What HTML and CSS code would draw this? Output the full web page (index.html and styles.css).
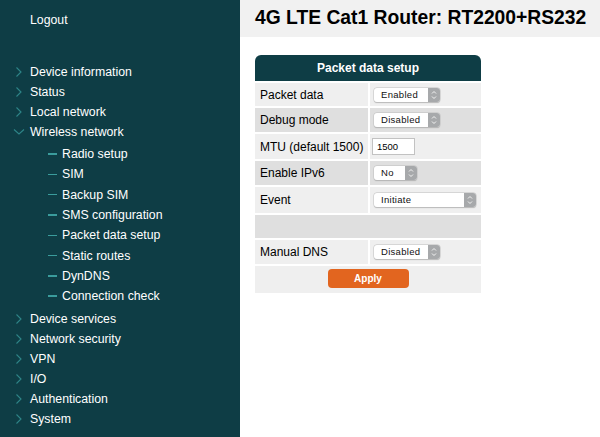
FILE: index.html
```html
<!DOCTYPE html>
<html>
<head>
<meta charset="utf-8">
<link rel="stylesheet" href="styles.css">
</head>
<body>
<nav class="sidebar">
  <div class="logout">Logout</div>
  <ul class="menu">
    <li class="item"><svg class="chev" viewBox="0 0 8 12"><path d="M1.5 1.5 L6 6 L1.5 10.5"/></svg><span>Device information</span></li>
    <li class="item"><svg class="chev" viewBox="0 0 8 12"><path d="M1.5 1.5 L6 6 L1.5 10.5"/></svg><span>Status</span></li>
    <li class="item"><svg class="chev" viewBox="0 0 8 12"><path d="M1.5 1.5 L6 6 L1.5 10.5"/></svg><span>Local network</span></li>
    <li class="item"><svg class="chev down" viewBox="0 0 12 8"><path d="M1 1.5 L6 6 L11 1.5"/></svg><span>Wireless network</span></li>
    <li class="sub">
      <ul class="submenu">
        <li><i class="dash"></i><span>Radio setup</span></li>
        <li><i class="dash"></i><span>SIM</span></li>
        <li><i class="dash"></i><span>Backup SIM</span></li>
        <li><i class="dash"></i><span>SMS configuration</span></li>
        <li><i class="dash"></i><span>Packet data setup</span></li>
        <li><i class="dash"></i><span>Static routes</span></li>
        <li><i class="dash"></i><span>DynDNS</span></li>
        <li><i class="dash"></i><span>Connection check</span></li>
      </ul>
    </li>
    <li class="item"><svg class="chev" viewBox="0 0 8 12"><path d="M1.5 1.5 L6 6 L1.5 10.5"/></svg><span>Device services</span></li>
    <li class="item"><svg class="chev" viewBox="0 0 8 12"><path d="M1.5 1.5 L6 6 L1.5 10.5"/></svg><span>Network security</span></li>
    <li class="item"><svg class="chev" viewBox="0 0 8 12"><path d="M1.5 1.5 L6 6 L1.5 10.5"/></svg><span>VPN</span></li>
    <li class="item"><svg class="chev" viewBox="0 0 8 12"><path d="M1.5 1.5 L6 6 L1.5 10.5"/></svg><span>I/O</span></li>
    <li class="item"><svg class="chev" viewBox="0 0 8 12"><path d="M1.5 1.5 L6 6 L1.5 10.5"/></svg><span>Authentication</span></li>
    <li class="item"><svg class="chev" viewBox="0 0 8 12"><path d="M1.5 1.5 L6 6 L1.5 10.5"/></svg><span>System</span></li>
  </ul>
</nav>
<main class="main">
  <header class="topbar"><h1>4G LTE Cat1 Router: RT2200+RS232</h1></header>
  <div class="form">
    <div class="form-head">Packet data setup</div>
    <div class="row r-light h23">
      <div class="label">Packet data</div>
      <div class="value"><span class="select w66"><span class="sel-text">Enabled</span><span class="arrows"><svg viewBox="0 0 12 14"><path d="M4 5.5 L6 3.5 L8 5.5 M4 8.5 L6 10.5 L8 8.5"/></svg></span></span></div>
    </div>
    <div class="row r-dark h24">
      <div class="label">Debug mode</div>
      <div class="value"><span class="select w66"><span class="sel-text">Disabled</span><span class="arrows"><svg viewBox="0 0 12 14"><path d="M4 5.5 L6 3.5 L8 5.5 M4 8.5 L6 10.5 L8 8.5"/></svg></span></span></div>
    </div>
    <div class="row r-light h25">
      <div class="label">MTU (default 1500)</div>
      <div class="value"><span class="input">1500</span></div>
    </div>
    <div class="row r-dark h24">
      <div class="label">Enable IPv6</div>
      <div class="value"><span class="select w43"><span class="sel-text">No</span><span class="arrows"><svg viewBox="0 0 12 14"><path d="M4 5.5 L6 3.5 L8 5.5 M4 8.5 L6 10.5 L8 8.5"/></svg></span></span></div>
    </div>
    <div class="row r-light h26">
      <div class="label">Event</div>
      <div class="value"><span class="select w102"><span class="sel-text">Initiate</span><span class="arrows"><svg viewBox="0 0 12 14"><path d="M4 5.5 L6 3.5 L8 5.5 M4 8.5 L6 10.5 L8 8.5"/></svg></span></span></div>
    </div>
    <div class="row r-dark h23 full"></div>
    <div class="row r-light h24">
      <div class="label">Manual DNS</div>
      <div class="value"><span class="select w66"><span class="sel-text">Disabled</span><span class="arrows"><svg viewBox="0 0 12 14"><path d="M4 5.5 L6 3.5 L8 5.5 M4 8.5 L6 10.5 L8 8.5"/></svg></span></span></div>
    </div>
    <div class="row r-light h27 full action">
      <button class="apply">Apply</button>
    </div>
  </div>
</main>
</body>
</html>
```
FILE: styles.css
```css
* { box-sizing: border-box; }
html, body { margin: 0; padding: 0; height: 100%; }
body {
  display: flex;
  font-family: "Liberation Sans", Arial, Helvetica, sans-serif;
  background: #ffffff;
  color: #000;
  overflow: hidden;
}
.sidebar {
  width: 240px;
  flex: none;
  height: 437px;
  background: #0e3d45;
  color: #ffffff;
  font-size: 12.3px;
}
.logout {
  padding: 10px 0 0 30px;
  line-height: 20px;
  height: 62px;
}
.menu, .submenu {
  list-style: none;
  margin: 0;
  padding: 0;
}
.item {
  display: flex;
  align-items: center;
  height: 20px;
  line-height: 20px;
}
.chev {
  width: 8px;
  height: 12px;
  margin: 0 7px 0 15px;
  fill: none;
  stroke: #2e8588;
  stroke-width: 1.1;
}
.chev.down {
  width: 12px;
  height: 8px;
  margin: 0 5px 0 13px;
}
.submenu {
  padding: 2px 0 3px;
}
.submenu li {
  display: flex;
  align-items: center;
  height: 20.3px;
  line-height: 20px;
  padding-left: 48px;
}
.dash {
  display: block;
  width: 9px;
  height: 1.5px;
  background: #3a9c9c;
  margin-right: 5px;
}
.main {
  flex: 1;
  min-width: 0;
}
.topbar {
  background: #f1f1f1;
  height: 37px;
  padding-left: 15px;
}
.topbar h1 {
  margin: 0;
  font-size: 19.3px;
  font-weight: bold;
  line-height: 37px;
  position: relative;
  top: -1px;
}
.form {
  margin: 18px 0 0 15px;
  width: 226px;
  display: flex;
  flex-direction: column;
  gap: 2px;
}
.form-head {
  background: #0e3d45;
  color: #fff;
  font-weight: bold;
  font-size: 12px;
  text-align: center;
  height: 26px;
  line-height: 26px;
  border-radius: 6px 6px 0 0;
}
.row {
  display: flex;
  gap: 2px;
  font-size: 12px;
}
.h23 { height: 23px; }
.h24 { height: 24px; }
.h25 { height: 25px; }
.h26 { height: 26px; }
.h27 { height: 27px; }
.label {
  width: 113px;
  flex: none;
  display: flex;
  align-items: center;
  padding-left: 5px;
  white-space: nowrap;
}
.value {
  flex: 1;
  display: flex;
  align-items: center;
  padding-left: 4px;
}
.r-light .label, .r-light .value, .r-light.full { background: #efefef; }
.r-dark .label, .r-dark .value, .r-dark.full { background: #dfdfdf; }
.select {
  display: flex;
  height: 14px;
  background: #fff;
  border-radius: 3px;
  box-shadow: 0 0 0 0.5px #c4c4c4, 0 0.5px 1px rgba(0,0,0,0.25);
  font-size: 9.5px;
  letter-spacing: 0.3px;
  line-height: 14px;
  color: #111;
}
.sel-text {
  flex: 1;
  padding-left: 7px;
  white-space: nowrap;
}
.arrows {
  width: 12px;
  flex: none;
  background: #a7a9ab;
  border-radius: 0 3px 3px 0;
  display: flex;
}
.arrows svg {
  width: 12px;
  height: 14px;
  fill: none;
  stroke: #f4f4f4;
  stroke-width: 1;
}
.w66 { width: 66px; }
.w43 { width: 43px; }
.w102 { width: 102px; }
.input {
  width: 43px;
  height: 17px;
  margin-left: -2px;
  background: #fff;
  border: 1px solid #c2c2c2;
  font-size: 9.5px;
  line-height: 15px;
  padding-left: 4px;
}
.action {
  display: flex;
  justify-content: center;
  align-items: center;
}
.apply {
  width: 81px;
  height: 19px;
  background: #e2651f;
  border: none;
  border-radius: 4px;
  color: #fff;
  font-family: "Liberation Sans", Arial, sans-serif;
  font-weight: bold;
  font-size: 10px;
  padding: 0;
  position: relative;
  top: -1px;
}
```
